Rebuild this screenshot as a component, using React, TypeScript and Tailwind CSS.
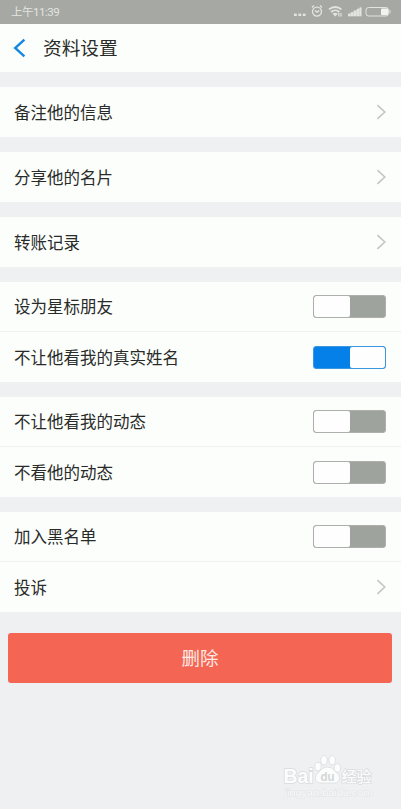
import React from 'react';

interface SettingItem {
  label: string;
  type: 'link' | 'toggle';
  on?: boolean;
}

const groups: SettingItem[][] = [
  [{ label: '备注他的信息', type: 'link' }],
  [{ label: '分享他的名片', type: 'link' }],
  [{ label: '转账记录', type: 'link' }],
  [
    { label: '设为星标朋友', type: 'toggle' },
    { label: '不让他看我的真实姓名', type: 'toggle', on: true },
  ],
  [
    { label: '不让他看我的动态', type: 'toggle' },
    { label: '不看他的动态', type: 'toggle' },
  ],
  [
    { label: '加入黑名单', type: 'toggle' },
    { label: '投诉', type: 'link' },
  ],
];

const StatusBar = () => (
  <div className="h-6 bg-[#a6a8a3] flex items-center justify-between pl-[11px] pr-[10px] text-[#e3e4e1]">
    <span className="text-[11.5px] leading-none pt-0.5 tracking-[-0.5px]">上午11:39</span>
    <svg width="98" height="16" viewBox="0 0 98 16" fill="none" stroke="currentColor">
      {/* Notification dots */}
      <g fill="currentColor" stroke="none">
        <rect x="1" y="9.6" width="2.8" height="2.4" />
        <rect x="5.4" y="9.6" width="2.8" height="2.4" />
        <rect x="9.8" y="9.6" width="2.8" height="2.4" />
      </g>
      {/* Alarm */}
      <circle cx="24" cy="7.6" r="4.5" strokeWidth="1.4" />
      <path d="M22 6.4l2 1.8 2.2-1.6M19 3.4l2-1.8M29 3.4l-2-1.8" strokeWidth="1.4" />
      {/* Wifi */}
      <path d="M36 5.4c3.6-3.2 8.8-3.2 12.4 0M38 8c2.5-2.2 6-2.2 8.4 0" strokeWidth="1.8" />
      <path d="M39.6 9.8c1.5-1.4 3.600-1.4 5.2 0L42.2 12.4z" fill="currentColor" stroke="none" />
      <path d="M45.8 9v3.4M48 9v3.4" strokeWidth="1.2" />
      {/* Signal */}
      <path d="M55 12.2V10l13.4-7v9.2z" fill="currentColor" opacity="0.5" stroke="none" />
      <path d="M55 12.2h2.6V9.800H55zM58 12.2h2.6v-4H58zM61 12.2h2.6V6.4H61zM64 12.2h2.2V4.8H64zM66.6 12.2h1.800V3.4h-1.800z" fill="currentColor" stroke="none" />
      {/* Battery */}
      <rect x="73" y="3.5" width="22.5" height="8.5" rx="2.6" strokeWidth="1" />
      <rect x="88" y="4.6" width="7" height="6.4" rx="1" fill="#f3f4f2" stroke="none" />
      <path d="M97 6v3.4" strokeWidth="1" />
    </svg>
  </div>
);

const Toggle = ({ on }: { on?: boolean }) => (
  <div
    className={`w-[73px] h-[23px] rounded-[3px] border flex overflow-hidden ${
      on ? 'border-[#3d97df] bg-[#0580e8]' : 'border-[#adafab] bg-[#9fa39d] flex-row-reverse'
    }`}
  >
    <div className="flex-1" />
    <div className="w-[35.5px] rounded-[2px] bg-[#fdfefd]" />
  </div>
);

const Chevron = () => (
  <svg width="10" height="16" viewBox="0 0 10 16" fill="none" stroke="#c4c6c4" strokeWidth="1.6">
    <path d="M1.4 1.2L8.8 8l-7.4 6.8" />
  </svg>
);

const Watermark = () => (
  <svg width="96" height="46" viewBox="0 0 96 46" fill="#fcfdfd" stroke="#d9dcdc" strokeWidth="0.8" className="font-['Liberation_Sans','Noto_Sans_CJK_SC',sans-serif]">
    <ellipse cx="37" cy="12.5" rx="3.2" ry="4.2" />
    <ellipse cx="43" cy="6.2" rx="3.2" ry="4.6" />
    <ellipse cx="51.2" cy="6.2" rx="3.2" ry="4.6" />
    <ellipse cx="56.4" cy="14" rx="3.2" ry="4.2" />
    <path d="M46.5 13c4.2 0 6 2.600 8.400 5 2.800 2.600 4 4.600 3.400 7.400-.800 3-3.400 3.800-6.400 3.600H41c-3 .2-5.600-.6-6.400-3.600-.6-2.800.6-4.800 3.400-7.400 2.400-2.400 4.300-5 8.500-5z" />
    <g paintOrder="stroke">
      <text x="2.5" y="28.5" fontSize="20" fontWeight="700" strokeWidth="1.6" textLength="30" lengthAdjust="spacingAndGlyphs">Bai</text>
      <text x="39.5" y="27" fontSize="12.5" fontWeight="700" fill="#d2d6d6" stroke="none" textLength="14" lengthAdjust="spacingAndGlyphs">du</text>
      <text x="60.5" y="27.5" fontSize="15" fontWeight="500" strokeWidth="1.4" textLength="30" lengthAdjust="spacingAndGlyphs">经验</text>
      <text x="3.5" y="42" fontSize="9.5" fill="#f9fbfb" stroke="#e0e3e3" strokeWidth="0.8" textLength="88" lengthAdjust="spacingAndGlyphs">jingyan.baidu.com</text>
    </g>
  </svg>
);

const App = () => {
  return (
    <div className="relative w-full h-[809px] bg-[#eef0f2] text-[#292b29] font-['Roboto','Noto_Sans_CJK_SC',sans-serif] overflow-hidden">
      <StatusBar />

      {/* Header */}
      <header className="h-12 bg-[#fcfefc] flex items-center pl-[13px]">
        <svg width="14" height="20" viewBox="0 0 14 20" fill="none" stroke="#1688df" strokeWidth="2.4">
          <path d="M11.4 1.6L2.2 10l9.2 8.4" />
        </svg>
        <h1 className="ml-4 pt-[3px] text-[18.7px] leading-none">资料设置</h1>
      </header>

      {/* Settings */}
      <main className="mt-[15px] flex flex-col gap-[15px]">
        {groups.map((group) => (
          <section key={group[0].label} className="bg-[#fcfefc] divide-y divide-[#f0f1f1]">
            {group.map((item) => (
              <div key={item.label} className="h-[50px] flex items-center justify-between pl-3.5 pr-[15px]">
                <span className="pt-1 text-[16.5px] leading-none">{item.label}</span>
                {item.type === 'toggle' ? <Toggle on={item.on} /> : <Chevron />}
              </div>
            ))}
          </section>
        ))}
      </main>

      <div className="pl-2 pr-[9px] mt-[21px]">
        <button className="w-full h-[50px] pt-1 rounded-[3px] bg-[#f46653] text-[#fde9e5] text-[18.5px]">删除</button>
      </div>

      <div className="absolute left-[281px] top-[754px]">
        <Watermark />
      </div>
    </div>
  );
};

export default App;
